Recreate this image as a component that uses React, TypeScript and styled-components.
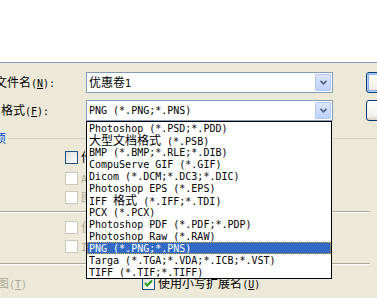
import React from 'react';
import styled, { createGlobalStyle } from 'styled-components';

const GlobalStyle = createGlobalStyle`
  html, body {
    margin: 0;
    padding: 0;
  }
  body {
    background: #ece9d8;
  }
`;

const LATIN = `'DejaVu Sans Mono', monospace`;
const CJK_FONT = `'Noto Sans CJK SC', sans-serif`;

// splits a label into CJK / latin runs; "&X" marks a mnemonic (underlined)
function renderText(text: string) {
  const parts: React.ReactNode[] = [];
  const re = /([\u3000-\u9fff\uff00-\uffef]+)|(&.)|([^\u3000-\u9fff\uff00-\uffef&]+)/g;
  let m: RegExpExecArray | null;
  let i = 0;
  while ((m = re.exec(text))) {
    if (m[1]) parts.push(<Cjk key={i++}>{m[1]}</Cjk>);
    else if (m[2]) parts.push(<Latin key={i++}><u>{m[2].slice(1)}</u></Latin>);
    else parts.push(<Latin key={i++}>{m[3]}</Latin>);
  }
  return parts;
}

const FORMATS = [
  'Photoshop (*.PSD;*.PDD)',
  '大型文档格式 (*.PSB)',
  'BMP (*.BMP;*.RLE;*.DIB)',
  'CompuServe GIF (*.GIF)',
  'Dicom (*.DCM;*.DC3;*.DIC)',
  'Photoshop EPS (*.EPS)',
  'IFF 格式 (*.IFF;*.TDI)',
  'PCX (*.PCX)',
  'Photoshop PDF (*.PDF;*.PDP)',
  'Photoshop Raw (*.RAW)',
  'PNG (*.PNG;*.PNS)',
  'Targa (*.TGA;*.VDA;*.ICB;*.VST)',
  'TIFF (*.TIF;*.TIFF)',
];
const SELECTED = 10;

const Chevron = () => (
  <svg width="7" height="5" viewBox="0 0 7 5">
    <path d="M0.5 0.8 L3.5 3.8 L6.5 0.8" fill="none" stroke="#4d6185" strokeWidth="1.6" />
  </svg>
);

const CheckMark = () => (
  <svg width="11" height="11" viewBox="0 0 11 11">
    <path d="M2 5 L4.3 7.5 L9 2.5" fill="none" stroke="#21a121" strokeWidth="2" />
  </svg>
);

type BoxProps = { disabled?: boolean; checked?: boolean };
const CheckBox: React.FC<BoxProps> = ({ disabled, checked }) => (
  <Box $disabled={disabled}>{checked && <CheckMark />}</Box>
);

export default function App() {
  return (
    <>
      <GlobalStyle />
      <Dialog>
        <FileView />
        <Form>
          <FieldRow>
            <FieldLabel $shift={-5}>{renderText('文件名(&N):')}</FieldLabel>
            <Combo>
              <ComboText>{renderText('优惠卷1')}</ComboText>
              <ComboButton><Chevron /></ComboButton>
            </Combo>
            <PushButton $isDefault>{renderText('保存(&S)')}</PushButton>
          </FieldRow>
          <FieldRow>
            <FieldLabel $shift={1}>{renderText('格式(&F):')}</FieldLabel>
            <Combo>
              <ComboText>{renderText('PNG (*.PNG;*.PNS)')}</ComboText>
              <ComboButton><Chevron /></ComboButton>
            </Combo>
            <PushButton>{renderText('取消')}</PushButton>
          </FieldRow>
          <DropList>
            {FORMATS.map((f, i) => (
              <ListItem key={f} $selected={i === SELECTED}>{renderText(f)}</ListItem>
            ))}
          </DropList>
        </Form>
        <Options>
          <GroupTitle>
            <TitleText>{renderText('存储选项')}</TitleText>
            <TitleLine />
          </GroupTitle>
          <CheckList $top={7}>
            <CheckRow $gap={0}><CheckBox /><CheckLabel>{renderText('作为副本(&Y)')}</CheckLabel></CheckRow>
            <CheckRow $gap={8}><CheckBox disabled /><CheckLabel $disabled>{renderText('Alpha 通道(&E)')}</CheckLabel></CheckRow>
            <CheckRow $gap={6}><CheckBox disabled /><CheckLabel $disabled>{renderText('图层(&L)')}</CheckLabel></CheckRow>
          </CheckList>
          <Etched $top={7} />
          <CheckList $top={8}>
            <CheckRow $gap={0}><CheckBox disabled /><CheckLabel $disabled>{renderText('使用校样设置(&O)')}</CheckLabel></CheckRow>
            <CheckRow $gap={6}><CheckBox disabled /><CheckLabel $disabled>{renderText('ICC 配置文件(&C)')}</CheckLabel></CheckRow>
          </CheckList>
          <Etched $top={10} />
          <BottomRow>
            <ThumbLabel>{renderText('缩览图(&T)')}</ThumbLabel>
            <CheckRow $gap={0}>
              <CheckBox checked />
              <CheckLabel>{renderText('使用小写扩展名(&U)')}</CheckLabel>
            </CheckRow>
          </BottomRow>
        </Options>
      </Dialog>
    </>
  );
}

const Cjk = styled.span`
  font-family: ${CJK_FONT};
  font-size: 12px;
`;

const Latin = styled.span`
  font-family: ${LATIN};
  font-size: 10px;
  white-space: pre;

  u {
    text-underline-offset: 1px;
  }
`;

const Dialog = styled.div`
  position: relative;
  width: 377px;
  height: 298px;
  overflow: hidden;
  background: #ece9d8;
  color: #000;
  font-size: 12px;
  line-height: 12px;
`;

const FileView = styled.div`
  height: 62px;
  background: #fff;
  border-bottom: 1px solid #7f9db9;
`;

const Form = styled.div`
  position: relative;
  display: flex;
  flex-direction: column;
  gap: 7px;
  padding-top: 9px;
`;

const FieldRow = styled.div`
  display: flex;
  align-items: center;
  height: 21px;
`;

const FieldLabel = styled.div<{ $shift: number }>`
  flex: none;
  width: ${(p) => 86 - p.$shift}px;
  margin-left: ${(p) => p.$shift}px;
  white-space: nowrap;
`;

const Combo = styled.div`
  flex: none;
  display: flex;
  align-items: center;
  box-sizing: border-box;
  width: 247px;
  height: 21px;
  background: #fff;
  border: 1px solid #7f9db9;
  padding-left: 2px;
`;

const ComboText = styled.div`
  flex: 1;
  white-space: nowrap;
  overflow: hidden;
`;

const ComboButton = styled.div`
  flex: none;
  display: flex;
  align-items: center;
  justify-content: center;
  box-sizing: border-box;
  width: 16px;
  height: 17px;
  margin-right: 1px;
  border: 1px solid #b3c8f5;
  border-radius: 1px;
  background: linear-gradient(#dce7fe, #bcd0fa);
`;

const PushButton = styled.div<{ $isDefault?: boolean }>`
  flex: none;
  box-sizing: border-box;
  width: 75px;
  height: 21px;
  margin-left: 33px;
  display: flex;
  align-items: center;
  justify-content: center;
  border: 1px solid #003c74;
  border-radius: 3px;
  background: linear-gradient(#fff, #f0f0ea 80%, #d6d0c5);
  box-shadow: ${(p) => (p.$isDefault ? 'inset 0 0 0 1px #b9d1fa, inset 0 0 0 2px #89adf0' : 'none')};
`;

const DropList = styled.div`
  position: absolute;
  left: 86px;
  top: 58px;
  box-sizing: border-box;
  width: 246px;
  border: 1px solid #000;
  background: #fff;
`;

const ListItem = styled.div<{ $selected?: boolean }>`
  height: 12px;
  line-height: 12px;
  padding-left: 2px;
  white-space: nowrap;
  box-sizing: border-box;
  background: ${(p) => (p.$selected ? '#316ac5' : 'transparent')};
  color: ${(p) => (p.$selected ? '#fff' : '#000')};
  outline: ${(p) => (p.$selected ? '1px dotted #d8a23c' : 'none')};
  outline-offset: -1px;
`;

const Options = styled.div`
  display: flex;
  flex-direction: column;
`;

const GroupTitle = styled.div`
  display: flex;
  align-items: center;
  height: 12px;
  margin-top: 11px;
  margin-left: -42px;
`;

const TitleText = styled.div`
  color: #0046d5;
  white-space: nowrap;
`;

const TitleLine = styled.div`
  flex: 1;
  height: 0;
  margin-left: 2px;
  border-top: 1px solid #d0d0bf;
`;

const CheckList = styled.div<{ $top: number }>`
  display: flex;
  flex-direction: column;
  margin-top: ${(p) => p.$top}px;
  padding-left: 65px;
`;

const CheckRow = styled.div<{ $gap: number }>`
  display: flex;
  align-items: center;
  gap: 3px;
  height: 13px;
  margin-top: ${(p) => p.$gap}px;
`;

const Box = styled.div<{ $disabled?: boolean }>`
  flex: none;
  display: flex;
  align-items: center;
  justify-content: center;
  box-sizing: border-box;
  width: 13px;
  height: 13px;
  border: 1px solid ${(p) => (p.$disabled ? '#cac8bb' : '#1c5180')};
  background: ${(p) => (p.$disabled ? '#fff' : 'linear-gradient(135deg, #dcdcd7, #fff)')};
`;

const CheckLabel = styled.div<{ $disabled?: boolean }>`
  white-space: nowrap;
  color: ${(p) => (p.$disabled ? '#aca899' : '#000')};
`;

const Etched = styled.div<{ $top: number }>`
  width: 370px;
  height: 0;
  margin-top: ${(p) => p.$top}px;
  border-top: 1px solid #aca899;
  border-bottom: 1px solid #fff;
`;

const BottomRow = styled.div`
  display: flex;
  align-items: center;
  margin-top: 12px;
  height: 13px;
  margin-left: -27px;
  gap: 115px;
`;

const ThumbLabel = styled.div`
  color: #aca899;
  white-space: nowrap;
`;
